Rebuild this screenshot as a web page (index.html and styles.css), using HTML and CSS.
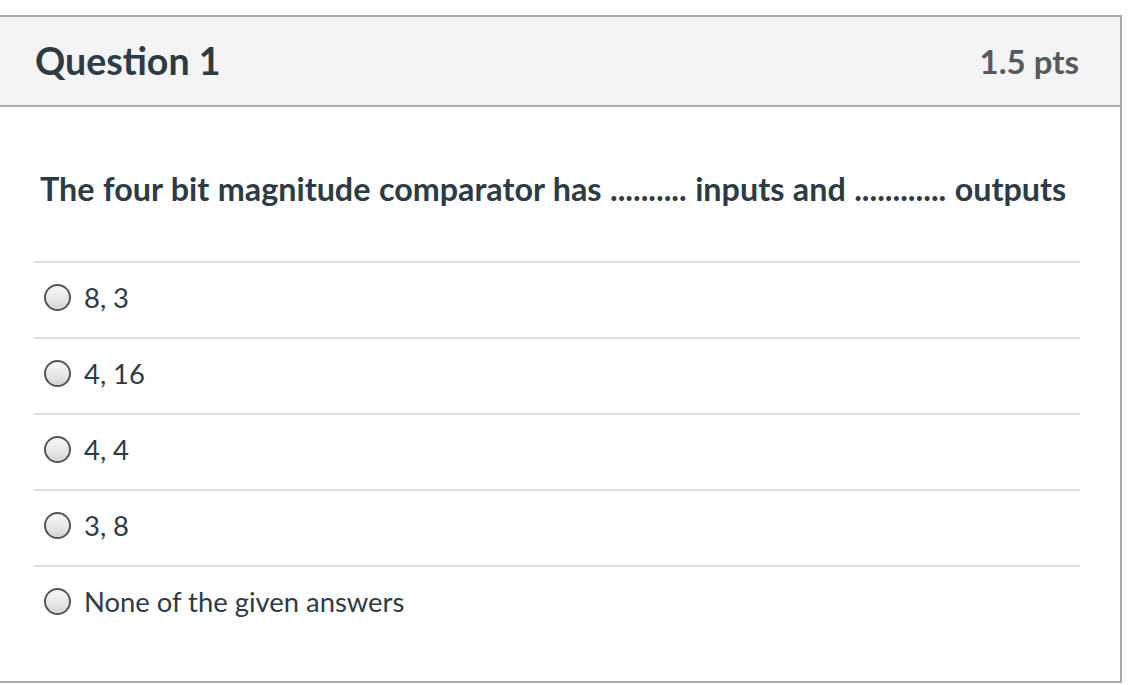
FILE: index.html
```html
<!DOCTYPE html>
<html>
<head>
<meta charset="utf-8">
<link rel="stylesheet" href="styles.css">
</head>
<body>
<div class="card">
  <div class="header">
    <h2 class="title">Question 1</h2>
    <span class="pts">1.5 pts</span>
  </div>
  <div class="body">
    <p class="question">The four bit magnitude comparator has .......... inputs and ............ outputs</p>
    <div class="answers">
      <label class="answer"><span class="radio"></span><span class="atext">8, 3</span></label>
      <label class="answer"><span class="radio"></span><span class="atext">4, 16</span></label>
      <label class="answer"><span class="radio"></span><span class="atext">4, 4</span></label>
      <label class="answer"><span class="radio"></span><span class="atext">3, 8</span></label>
      <label class="answer"><span class="radio"></span><span class="atext">None of the given answers</span></label>
    </div>
  </div>
</div>
</body>
</html>
```
FILE: styles.css
```css
html, body {
  margin: 0;
  padding: 0;
  background: #ffffff;
}
body {
  font-family: Lato, "Open Sans", sans-serif;
  color: #2d3b45;
  padding-top: 15px;
}
.card {
  margin: 0 16px 0 -2px;
  border: 2px solid #aaaaaa;
  height: 668px;
  box-sizing: border-box;
}
.header {
  height: 90px;
  box-sizing: border-box;
  background: #f4f4f4;
  border-bottom: 2px solid #aaaaaa;
  display: flex;
  align-items: center;
  justify-content: space-between;
  padding: 0 41px 0 35px;
}
.title {
  margin: 0;
  font-size: 37.5px;
  font-weight: 700;
  color: #2d3b45;
  line-height: 1;
}
.pts {
  font-size: 33px;
  font-weight: 700;
  color: #555a5e;
  line-height: 1;
}
.body {
  padding: 0 40px 0 34px;
}
.question {
  margin: 0;
  padding: 60px 0 0 6px;
  height: 154px;
  box-sizing: border-box;
  font-size: 32.3px;
  font-weight: 700;
  line-height: 44px;
  color: #2d3b45;
  white-space: nowrap;
  word-spacing: 0.6px;
}
.answers {
  display: flex;
  flex-direction: column;
}
.answer {
  display: flex;
  align-items: center;
  height: 76px;
  box-sizing: border-box;
  border-top: 2px solid #dedede;
  padding: 0 0 6px 10px;
  gap: 13px;
}
.radio {
  width: 27px;
  height: 27px;
  box-sizing: border-box;
  border-radius: 50%;
  border: 2px solid #555555;
  background: linear-gradient(180deg, #f8f8f8 0%, #e6e6e6 60%, #d4d4d4 100%);
  flex: none;
}
.atext {
  font-size: 27.4px;
  font-weight: 400;
  color: #2d3b45;
}
```
